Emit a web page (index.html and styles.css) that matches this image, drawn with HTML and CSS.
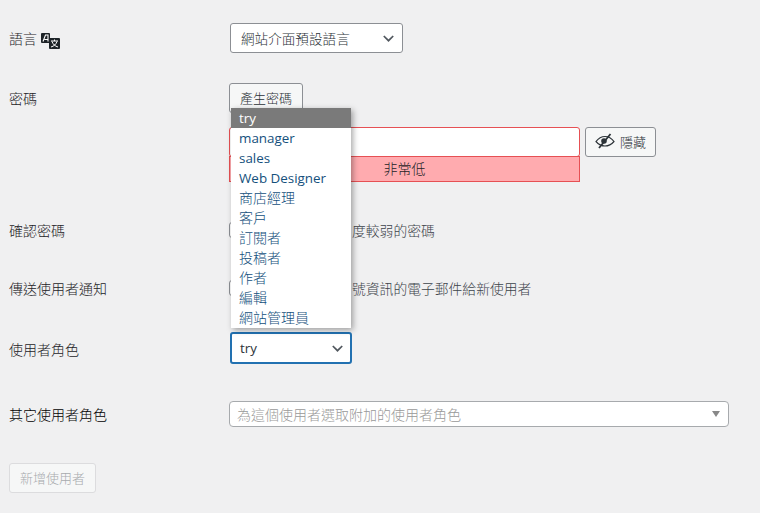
FILE: index.html
```html
<!DOCTYPE html>
<html lang="zh-Hant">
<head>
  <meta charset="UTF-8">
  <title>新增使用者</title>
  <link rel="stylesheet" href="styles.css">
</head>
<body>
  <form class="form">
    <div class="row row-lang">
      <label class="label">語言
        <svg class="lang-icon" width="20" height="17" viewBox="0 0 20 17">
          <rect x="0" y="0" width="9" height="10" rx="1" fill="#1d2327"/>
          <path d="M2 8.500 4.500 2H7V8.500M3.500 6.500H7" fill="none" stroke="#fff" stroke-width="1.100"/>
          <rect x="8" y="5" width="11" height="11" rx="1" fill="#1d2327"/>
          <path d="M10 8h7M13.500 6.500V8M11 8.500c.8 2.600 3 4.700 6 5.500M16 8.500c-.8 2.600-3 4.700-6 5.500" fill="none" stroke="#fff" stroke-width="1"/>
        </svg>
      </label>
      <div class="select select-lang">
        <span>網站介面預設語言</span>
        <svg class="chev" width="11" height="7" viewBox="0 0 11 7"><path d="M.8 1 5.500 5.700 10.200 1" fill="none" stroke="#50575e" stroke-width="1.700"/></svg>
      </div>
    </div>

    <div class="row row-pass">
      <label class="label">密碼</label>
      <div>
        <button type="button" class="btn btn-gen">產生密碼</button>
        <div class="pass-line">
          <div class="pass-box">
            <div class="pass-input"></div>
            <div class="pass-strength">非常低</div>
          </div>
          <button type="button" class="btn btn-hide">
            <svg width="20" height="16" viewBox="0 0 20 16"><path d="M1 8.500C4 4.500 7 3.500 10 3.500s6 1 9 5c-3 3.500-6 4.500-9 4.500s-6-1-9-4.500z" fill="none" stroke="#2c3338" stroke-width="1.200"/><circle cx="9" cy="8" r="2.800" fill="#2c3338"/><path d="M15.500 1 4 15" stroke="#2c3338" stroke-width="1.800"/></svg>
            隱藏
          </button>
        </div>
      </div>
    </div>

    <div class="row row-confirm">
      <label class="label">確認密碼</label>
      <div class="check"><i class="box"></i>度較弱的密碼</div>
    </div>

    <div class="row row-notify">
      <label class="label">傳送使用者通知</label>
      <div class="check"><i class="box"></i>號資訊的電子郵件給新使用者</div>
    </div>

    <div class="row row-role">
      <label class="label">使用者角色</label>
      <div class="role-field">
        <ul class="options">
          <li class="on">try</li>
          <li>manager</li>
          <li>sales</li>
          <li>Web Designer</li>
          <li class="zh">商店經理</li>
          <li class="zh">客戶</li>
          <li class="zh">訂閱者</li>
          <li class="zh">投稿者</li>
          <li class="zh">作者</li>
          <li class="zh">編輯</li>
          <li class="zh">網站管理員</li>
        </ul>
        <div class="select select-role">
          <span>try</span>
          <svg class="chev" width="11" height="7" viewBox="0 0 11 7"><path d="M.8 1 5.500 5.700 10.200 1" fill="none" stroke="#50575e" stroke-width="1.700"/></svg>
        </div>
      </div>
    </div>

    <div class="row row-other">
      <label class="label label-strong">其它使用者角色</label>
      <div class="multi">
        <span>為這個使用者選取附加的使用者角色</span>
        <i class="caret"></i>
      </div>
    </div>

    <button type="button" class="btn btn-off" disabled>新增使用者</button>
  </form>
</body>
</html>
```

FILE: styles.css
```css
*{ margin: 0; padding: 0; list-style: none; box-sizing: border-box; }
html, body{ height: 100%; overflow: hidden; }
body{
  background: #f0f0f1;
  color: #1d2327;
  font-family: "Open Sans", "Noto Sans CJK TC", sans-serif;
  font-size: 14px;
  font-weight: 300;
}
.form{ padding: 23px 0 0 9px; }
.row{
  display: grid;
  grid-template-columns: 220px 1fr;
}
.label{
  display: flex;
  align-items: center;
  gap: 4px;
  height: 30px;
}
.label-strong{ color: #000; }
.lang-icon{ align-self: flex-start; margin-top: 10px; }

.select{
  display: flex;
  align-items: center;
  justify-content: space-between;
  background: #fff;
  border: 1px solid #8c8f94;
  border-radius: 3px;
  color: #2c3338;
}
.select-lang{
  width: 173px;
  height: 30px;
  margin-left: 1px;
  padding: 0 8px 0 10px;
}
.select-lang span{ font-size: 13.6px; }
.select-role{
  width: 122px;
  height: 32px;
  margin-left: 1px;
  padding: 0 7px 0 8px;
  border: 2px solid #2271b1;
  font-weight: 400;
}
.select-role span{ font-size: 13.3px; }

.btn{
  display: inline-flex;
  align-items: center;
  justify-content: center;
  height: 30px;
  padding: 0 0 2px;
  background: #f6f7f7;
  border: 1px solid #8c8f94;
  border-radius: 3px;
  color: #2c3338;
  font: inherit;
  font-size: 13px;
}
.btn-gen{ width: 74px; }

.row-pass{ margin-top: 30px; }
.pass-line{
  display: flex;
  gap: 5px;
  margin-top: 14px;
}
.pass-box{ width: 351px; }
.pass-input{
  height: 30px;
  background: #fff;
  border: 1px solid #e65054;
  border-radius: 3px;
}
.pass-strength{
  height: 26px;
  line-height: 24px;
  margin-top: -1px;
  background: #ffabaf;
  border: 1px solid #e65054;
  text-align: center;
}
.btn-hide{
  gap: 5px;
  width: 71px;
}

.row-confirm{ margin-top: 33px; }
.row-notify{ margin-top: 28px; }
.check{
  display: flex;
  align-items: center;
  height: 30px;
  color: #3c434a;
  font-size: 13.8px;
}
.box{
  flex: none;
  width: 16px;
  height: 16px;
  margin-right: 107px;
  background: #fff;
  border: 1px solid #8c8f94;
  border-radius: 3px;
}

.row-role{ margin-top: 29px; align-items: center; height: 32px; }
.row-role .label{ padding-top: 1px; }
.role-field{ position: relative; }
.options{
  position: absolute;
  left: 2px;
  bottom: 36px;
  width: 120px;
  background: #fff;
  box-shadow: 2px 2px 6px rgba(0, 0, 0, .35);
  color: #14507c;
  font-weight: 400;
  font-size: 13.4px;
  z-index: 9;
}
.options li{
  height: 20px;
  line-height: 20px;
  padding-left: 8px;
}
.options .on{
  background: #7a7a7a;
  color: #fff;
}
.options .zh{
  font-size: 14px;
  font-weight: 300;
}

.row-other{ margin-top: 35px; align-items: center; }
.multi{
  display: flex;
  align-items: center;
  justify-content: space-between;
  width: 500px;
  height: 26px;
  padding: 0 8px 0 7px;
  background: #fff;
  border: 1px solid #a7aaad;
  border-radius: 4px;
  color: #999;
}
.caret{
  width: 0;
  height: 0;
  border: 4px solid transparent;
  border-top: 6px solid #888;
  border-bottom: 0;
}
.btn-off{
  display: flex;
  width: 87px;
  margin-top: 34px;
  border-color: #dcdcde;
  color: #a7aaad;
}
```
